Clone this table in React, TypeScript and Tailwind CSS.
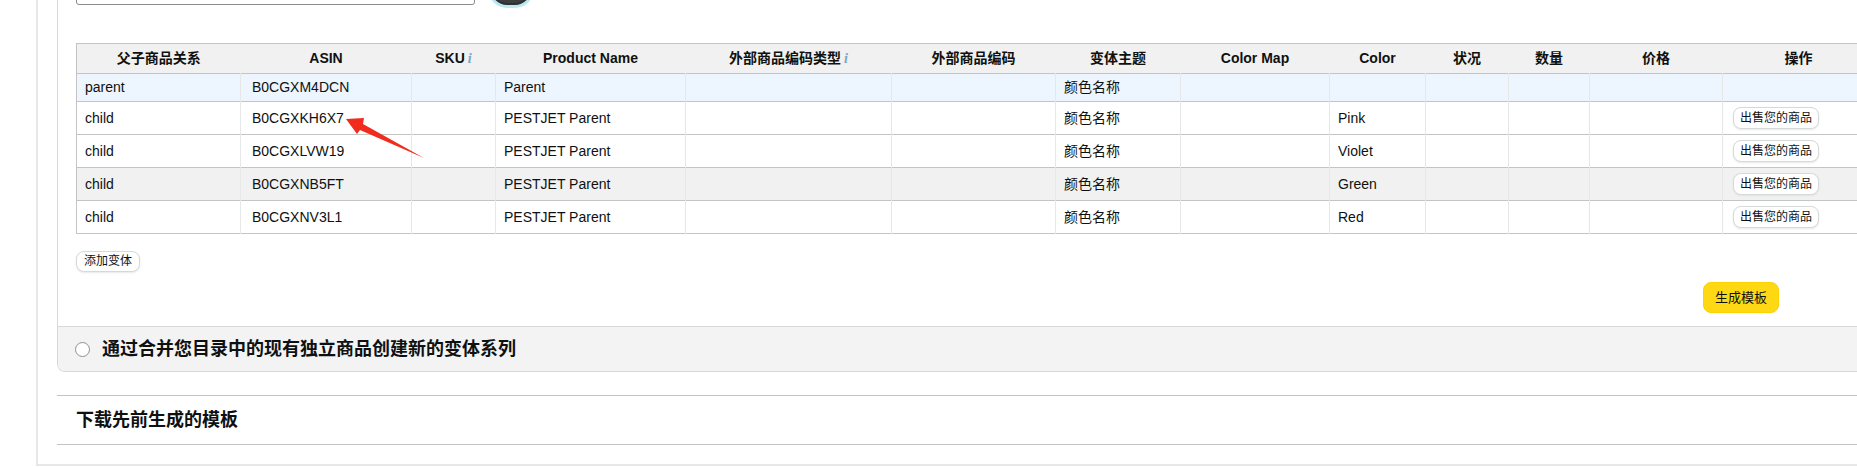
import React from "react";

const cols = [
  { w: "w-[164px]", label: "父子商品关系" },
  { w: "w-[171px]", label: "ASIN" },
  { w: "w-[84px]", label: "SKU", info: true },
  { w: "w-[190px]", label: "Product Name" },
  { w: "w-[206px]", label: "外部商品编码类型", info: true },
  { w: "w-[164px]", label: "外部商品编码" },
  { w: "w-[125px]", label: "变体主题" },
  { w: "w-[149px]", label: "Color Map" },
  { w: "w-[96px]", label: "Color" },
  { w: "w-[83px]", label: "状况" },
  { w: "w-[81px]", label: "数量" },
  { w: "w-[133px]", label: "价格" },
  { w: "w-[152px]", label: "操作" },
];

type Row = { rel: string; asin: string; name: string; color: string; bg: string; action: boolean };

const rows: Row[] = [
  { rel: "parent", asin: "B0CGXM4DCN", name: "Parent", color: "", bg: "bg-[#edf5fe]", action: false },
  { rel: "child", asin: "B0CGXKH6X7", name: "PESTJET Parent", color: "Pink", bg: "bg-white", action: true },
  { rel: "child", asin: "B0CGXLVW19", name: "PESTJET Parent", color: "Violet", bg: "bg-white", action: true },
  { rel: "child", asin: "B0CGXNB5FT", name: "PESTJET Parent", color: "Green", bg: "bg-[#f0f1f0]", action: true },
  { rel: "child", asin: "B0CGXNV3L1", name: "PESTJET Parent", color: "Red", bg: "bg-white", action: true },
];

function Info() {
  return <span className="ml-[3px] font-['Liberation_Serif',serif] italic font-bold text-[#7aa6c6]">i</span>;
}

function SmallButton({ children, className }: { children: React.ReactNode; className?: string }) {
  return (
    <span
      className={
        "inline-flex items-center justify-center rounded-[8px] border border-[#d5d9d9] bg-white text-[12px] text-[#0f1111] shadow-[0_1px_2px_rgba(213,217,217,0.6)] " +
        (className ?? "")
      }
    >
      {children}
    </span>
  );
}

export default function App() {
  const td = "border-l border-[#e7e7e7] pl-2 align-middle whitespace-nowrap";

  return (
    <div className="relative w-[1857px] h-[467px] overflow-hidden bg-white text-[#0f1111] font-['Liberation_Sans','Noto_Sans_CJK_SC',sans-serif]">
      <div className="ml-[36px] h-[466px] border-l-2 border-b-2 border-[#e7e7e7] pl-[19px]">
        {/* variation card */}
        <div className="w-[1900px] border-l border-b border-[#d5d9d9] rounded-bl-[8px] overflow-hidden">
          <div className="pl-[18px]">
            {/* search row, cut off at top */}
            <div className="flex items-end gap-[16px] -mt-[28px]">
              <div className="w-[399px] h-[33px] rounded-[3px] border border-[#888c8c]" />
              <div className="w-[40px] h-[32px] rounded-full border-2 border-[#2d3131] bg-[#3a3e3e] ring-[3px] ring-[#bde8f0]" />
            </div>

            {/* variation table */}
            <table className="mt-[38px] table-fixed border-collapse text-[14px] border-t border-l border-b border-[#c4c4c4]">
              <colgroup>
                {cols.map((c) => (
                  <col key={c.label} className={c.w} />
                ))}
              </colgroup>
              <thead>
                <tr className="h-[30px] bg-[#f0f1f0] border-b border-[#c4c4c4]">
                  {cols.map((c) => (
                    <th key={c.label} className="font-bold text-center whitespace-nowrap align-middle">
                      {c.label}
                      {c.info && <Info />}
                    </th>
                  ))}
                </tr>
              </thead>
              <tbody>
                {rows.map((r, i) => (
                  <tr
                    key={r.asin}
                    className={r.bg + " border-b border-[#c4c4c4] " + (i === 0 ? "h-[28px]" : "h-[33px]")}
                  >
                    <td className={"pl-2 align-middle"}>{r.rel}</td>
                    <td className={td + " pl-[11px]"}>{r.asin}</td>
                    <td className={td}></td>
                    <td className={td}>{r.name}</td>
                    <td className={td}></td>
                    <td className={td}></td>
                    <td className={td}>颜色名称</td>
                    <td className={td}></td>
                    <td className={td}>{r.color}</td>
                    <td className={td}></td>
                    <td className={td}></td>
                    <td className={td}></td>
                    <td className={td + " pl-[10px]"}>
                      {r.action && <SmallButton className="h-[22px] px-[6px]">出售您的商品</SmallButton>}
                    </td>
                  </tr>
                ))}
              </tbody>
            </table>

            <div className="mt-[14px]">
              <SmallButton className="h-[21px] px-[7px]">添加变体</SmallButton>
            </div>

            <div className="w-[1703px] flex justify-end mt-[10px]">
              <span className="inline-flex items-center justify-center h-[31px] px-[11px] rounded-[8px] bg-[#ffd814] border border-[#fcd200] text-[13px]">
                生成模板
              </span>
            </div>
          </div>

          {/* merge option */}
          <div className="mt-[13px] h-[45px] border-t border-[#d5d9d9] bg-[#f3f3f3] flex items-center pl-[17px]">
            <span className="w-[15px] h-[15px] rounded-full border border-[#8d9090] bg-white" />
            <span className="ml-[12px] text-[18px] font-bold">通过合并您目录中的现有独立商品创建新的变体系列</span>
          </div>
        </div>

        {/* download section */}
        <div className="mt-[23px] h-[50px] border-t border-b border-[#c4c4c4] flex items-center pl-[19px]">
          <span className="text-[18px] font-bold">下载先前生成的模板</span>
        </div>
      </div>

      {/* red annotation arrow */}
      <svg className="absolute left-0 top-0 pointer-events-none" width="1857" height="467" viewBox="0 0 1857 467">
        <polygon
          points="346,119 364,118 363,124 424,158 360,130 357,134"
          fill="#f22b1f"
        />
      </svg>
    </div>
  );
}
